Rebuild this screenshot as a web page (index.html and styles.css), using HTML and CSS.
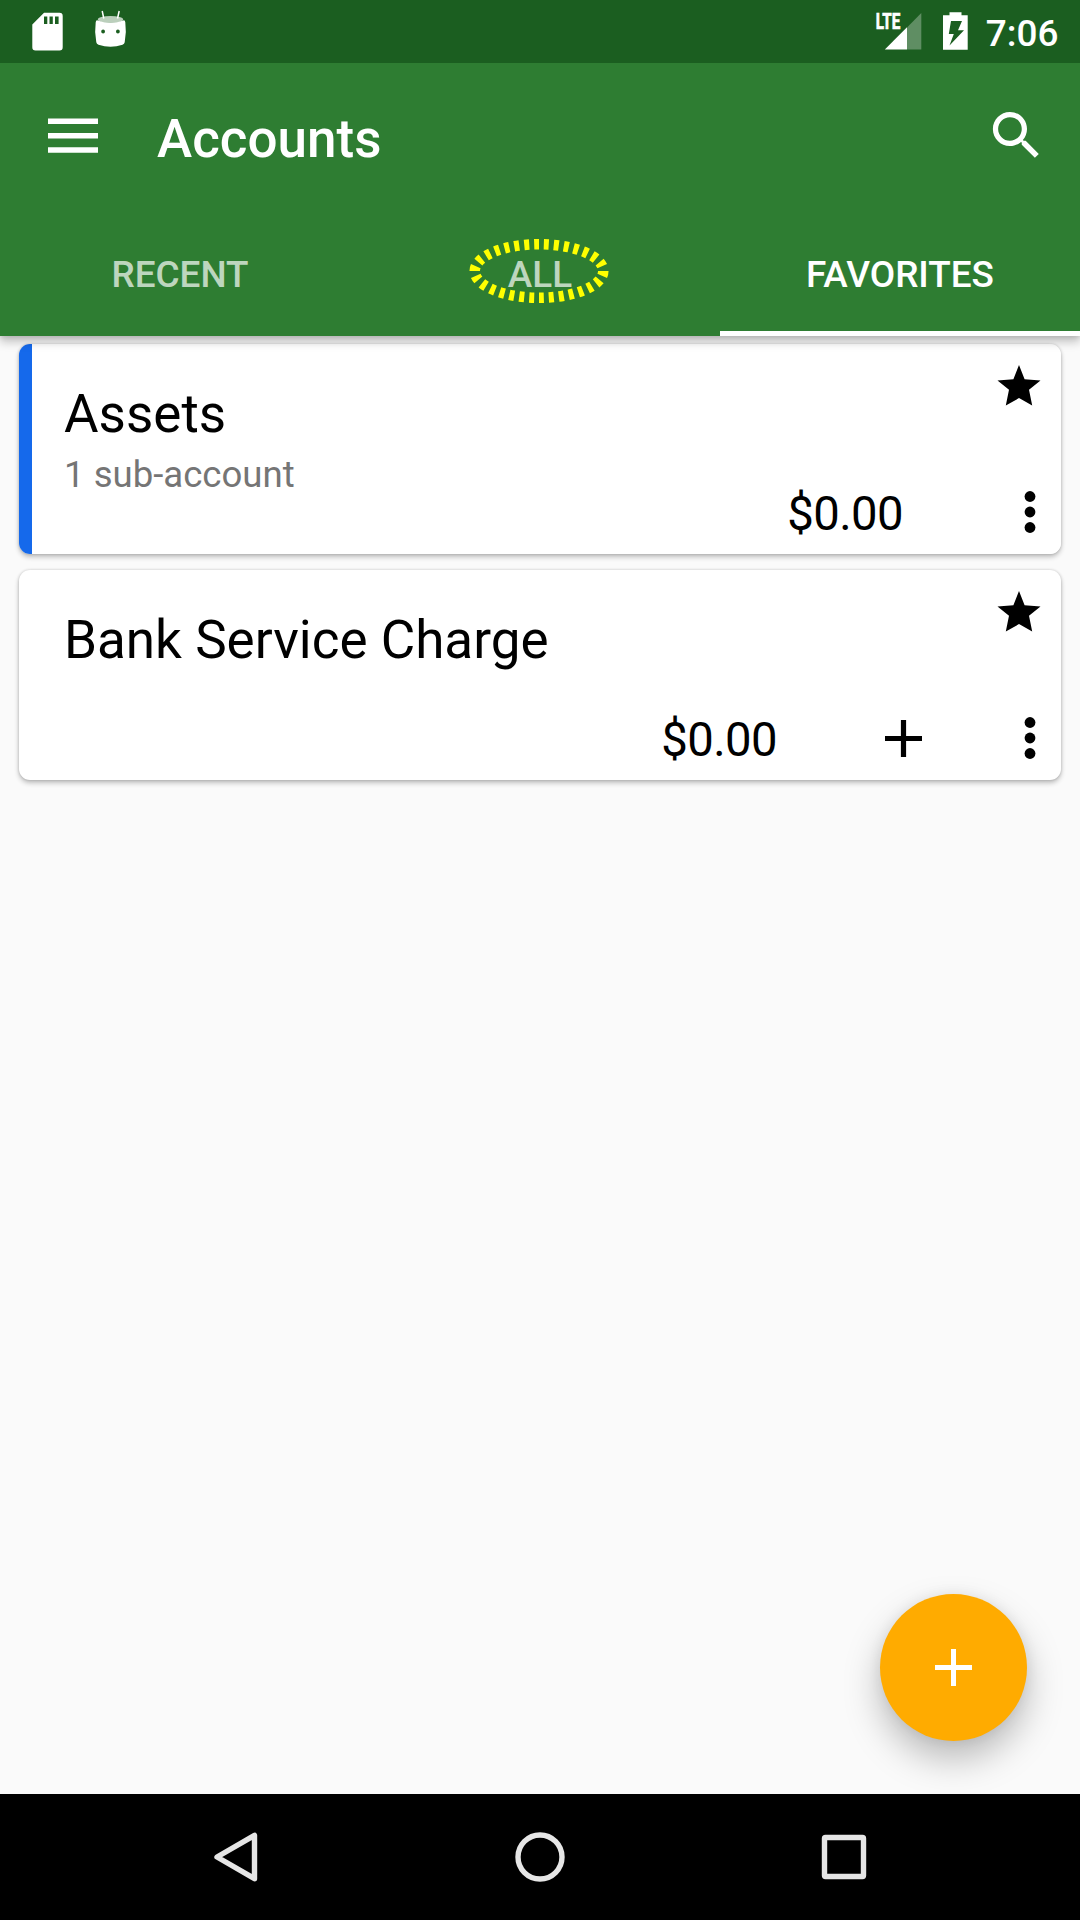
FILE: index.html
```html
<!DOCTYPE html>
<html lang="en">
<head>
<meta charset="utf-8">
<title>Accounts</title>
<link rel="stylesheet" href="styles.css">
</head>
<body>
<div class="screen">
  <header class="appbar">
    <div class="status">
      <svg class="notif" width="130" height="63" viewBox="0 0 130 63">
        <path fill="#fff" fill-rule="evenodd" d="M44 12.700h15.500a3.200 3.200 0 0 1 3.200 3.200v31.400a3.200 3.200 0 0 1-3.200 3.200H35.500a3.200 3.200 0 0 1-3.200-3.200V24.500zM44 16.500v7.500h3.300v-7.500zM49.500 16.500v7.500h3.300v-7.500zM55 16.500v7.500h3.600v-7.500z"/>
        <path fill="none" stroke="#fff" stroke-width="1.500" d="M102.200 11l1.600 7.500M119.200 11l-1.700 7.500"/>
        <ellipse cx="110.500" cy="19.500" rx="12.700" ry="3.400" fill="#fff" fill-opacity=".7"/>
        <path fill="#fff" fill-rule="evenodd" d="M97 20.300q13.500 5.400 27 0 1 0 1.300 2 1.400 10-.6 20-.3 1.700-2.200 2.400-12 4-24 0-1.900-.7-2.200-2.400-2-10-.6-20 .3-2 1.300-2zM101.200 31.500a1.900 1.900 0 1 0 3.800 0 1.900 1.900 0 1 0-3.800 0zM116 31.500a1.900 1.900 0 1 0 3.800 0 1.900 1.900 0 1 0-3.800 0z"/>
      </svg>
      <div class="system">
        <svg width="48" height="63" viewBox="875 0 48 63">
          <text class="lte" x="875.700" y="29.300" textLength="24.500" lengthAdjust="spacingAndGlyphs">LTE</text>
          <path fill="#fff" fill-opacity=".3" d="M907 27.500L921.300 13v36.500H907z"/>
          <path fill="#fff" d="M884.800 49.500L907 27.300v22.200z"/>
        </svg>
        <svg class="battery" width="26" height="63" viewBox="943 0 26 63">
          <path fill="#fff" fill-rule="evenodd" d="M949.500 12.200h12v3h6.200v34.600H943V15.200h6.500zM951 21l-2.200 13h5l-4.300 11.500L964 30.200h-6l4-9.200z"/>
        </svg>
        <span class="clock">7:06</span>
      </div>
    </div>
    <div class="toolbar">
      <svg class="menu" width="50" height="36" viewBox="0 0 50 36"><path stroke="#fff" stroke-width="5.500" d="M0 3.300h50M0 17.700h50M0 32h50"/></svg>
      <h1>Accounts</h1>
      <svg class="search" width="63" height="63" viewBox="0 0 24 24"><path fill="#fff" d="M15.500 14h-.79l-.28-.27C15.410 12.590 16 11.110 16 9.500 16 5.910 13.090 3 9.500 3S3 5.910 3 9.500 5.910 16 9.500 16c1.610 0 3.090-.59 4.230-1.570l.27.280v.790l5 4.990L20.490 19l-4.990-5zm-6 0C7.010 14 5 11.990 5 9.500S7.010 5 9.500 5 14 7.010 14 9.500 11.990 14 9.500 14z"/></svg>
    </div>
    <nav class="tabs">
      <div class="tab">RECENT</div>
      <div class="tab">ALL
        <svg class="ring" width="142" height="68" viewBox="0 0 142 68"><ellipse cx="71" cy="34" rx="64.300" ry="26.800" fill="none" stroke="#ff0" stroke-width="10.500" pathLength="300" stroke-dasharray="5 5"/></svg>
      </div>
      <div class="tab active">FAVORITES</div>
    </nav>
  </header>
  <main class="list">
    <article class="card parent">
      <div class="info"><h2>Assets</h2><p>1 sub-account</p></div>
      <span class="amount">$0.00</span>
      <div class="side">
        <svg class="star" width="44" height="42" viewBox="0 0 44 42"><path d="M22 0l5.600 14.200 15.900 1.200-11.500 9.300 3.200 15.800-13.200-7.400L8.800 40.500 12 24.700.5 15.400l15.900-1.200z"/></svg>
        <svg class="dots" width="12" height="42" viewBox="0 0 12 42"><circle cx="6" cy="5.500" r="5.400"/><circle cx="6" cy="21" r="5.400"/><circle cx="6" cy="36.500" r="5.400"/></svg>
      </div>
    </article>
    <article class="card">
      <div class="info"><h2>Bank Service Charge</h2></div>
      <span class="amount">$0.00</span>
      <svg class="add" width="37" height="37" viewBox="0 0 37 37"><path stroke="#000" stroke-width="5.200" d="M0 18.500h37M18.500 0v37"/></svg>
      <div class="side">
        <svg class="star" width="44" height="42" viewBox="0 0 44 42"><path d="M22 0l5.600 14.200 15.900 1.200-11.500 9.300 3.200 15.800-13.200-7.400L8.800 40.500 12 24.700.5 15.400l15.900-1.200z"/></svg>
        <svg class="dots" width="12" height="42" viewBox="0 0 12 42"><circle cx="6" cy="5.500" r="5.400"/><circle cx="6" cy="21" r="5.400"/><circle cx="6" cy="36.500" r="5.400"/></svg>
      </div>
    </article>
    <button class="fab" aria-label="Add account"><svg width="37" height="37" viewBox="0 0 37 37"><path stroke="#fff" stroke-width="5" d="M0 18.500h37M18.500 0v37"/></svg></button>
  </main>
  <footer class="navbar">
    <svg width="50" height="50" viewBox="0 0 50 50"><path d="M43.500 3.300v43.400L6 25z"/></svg>
    <svg width="50" height="50" viewBox="0 0 50 50"><circle cx="25" cy="25" r="22"/></svg>
    <svg width="50" height="50" viewBox="0 0 50 50"><rect x="5.500" y="5.500" width="39" height="39" rx="1"/></svg>
  </footer>
</div>
</body>
</html>
```
FILE: styles.css
```css
* { box-sizing: border-box; margin: 0; padding: 0; }
body { font-family: Roboto, "Liberation Sans", sans-serif; background: #fafafa; }
svg { display: block; flex: none; overflow: visible; }
.screen { width: 1080px; height: 1920px; display: flex; flex-direction: column; overflow: hidden; }

.appbar {
  position: relative; z-index: 1; height: 336px; flex: none;
  background: #2e7d32; color: #fff;
  box-shadow: 0 6px 9px rgba(0, 0, 0, .22), 0 1px 5px rgba(0, 0, 0, .12);
}
.status { height: 63px; background: #1b5e20; display: flex; justify-content: space-between; }
.system { display: flex; padding-right: 21.500px; }
.battery { margin-left: 20px; }
.lte { font: 700 21.500px Roboto, sans-serif; fill: #fff; stroke: #fff; stroke-width: .7px; }
.clock { margin-left: 17px; font-size: 36.900px; font-weight: 500; line-height: 67px; }
.toolbar { height: 147px; display: flex; align-items: center; padding: 0 32px 0 48px; }
.menu { margin-top: -2px; }
.toolbar h1 { font-size: 53px; font-weight: 500; margin-left: 59px; padding-top: 5px; flex: 1; }
.search { margin-top: -2px; }
.tabs { height: 126px; display: flex; }
.tab {
  position: relative; flex: 1; text-align: center; font-size: 36.900px; font-weight: 500;
  line-height: 126px; padding-top: 2px; color: rgba(255, 255, 255, .7);
}
.tab.active { color: #fff; border-bottom: 5px solid #fff; }
.ring { position: absolute; left: 108px; top: 27px; }

.list { position: relative; flex: 1; padding: 8px 19px; display: flex; flex-direction: column; gap: 16px; }
.card {
  height: 210px; border-radius: 11px; background: #fff; display: flex; padding-left: 45px;
  box-shadow: 0 3px 5px rgba(0, 0, 0, .24), 0 0 3px rgba(0, 0, 0, .18);
}
.parent { background: linear-gradient(to right, #1569eb 13px, #fff 13px); }
.info { flex: 1; padding-top: 39px; }
.info h2 { font-size: 53px; font-weight: 400; line-height: 62px; }
.info p { font-size: 36.600px; line-height: 43px; margin-top: 8px; color: #757575; }
.amount { align-self: flex-end; font-size: 47.250px; letter-spacing: -.6px; line-height: 56px; margin-bottom: 12px; }
.add { align-self: flex-end; margin: 0 -19px 23.500px 108px; }
.side {
  width: 64px; margin-left: 94px; padding: 21px 20px 21px 0;
  display: flex; flex-direction: column; justify-content: space-between; align-items: flex-end;
}
.dots { margin-right: 5px; }
.fab {
  position: absolute; right: 53px; bottom: 53px; width: 147px; height: 147px; border: 0; border-radius: 50%;
  background: #ffab00; display: flex; align-items: center; justify-content: center;
  box-shadow: 0 18px 36px rgba(0, 0, 0, .26), 0 0 14px rgba(0, 0, 0, .07);
}
.navbar {
  position: relative; height: 126px; flex: none; background: #000;
  display: flex; align-items: center; justify-content: center; gap: 254px;
}
.navbar svg { fill: none; stroke: #e6e6e6; stroke-width: 5.400; stroke-linejoin: round; }
```
